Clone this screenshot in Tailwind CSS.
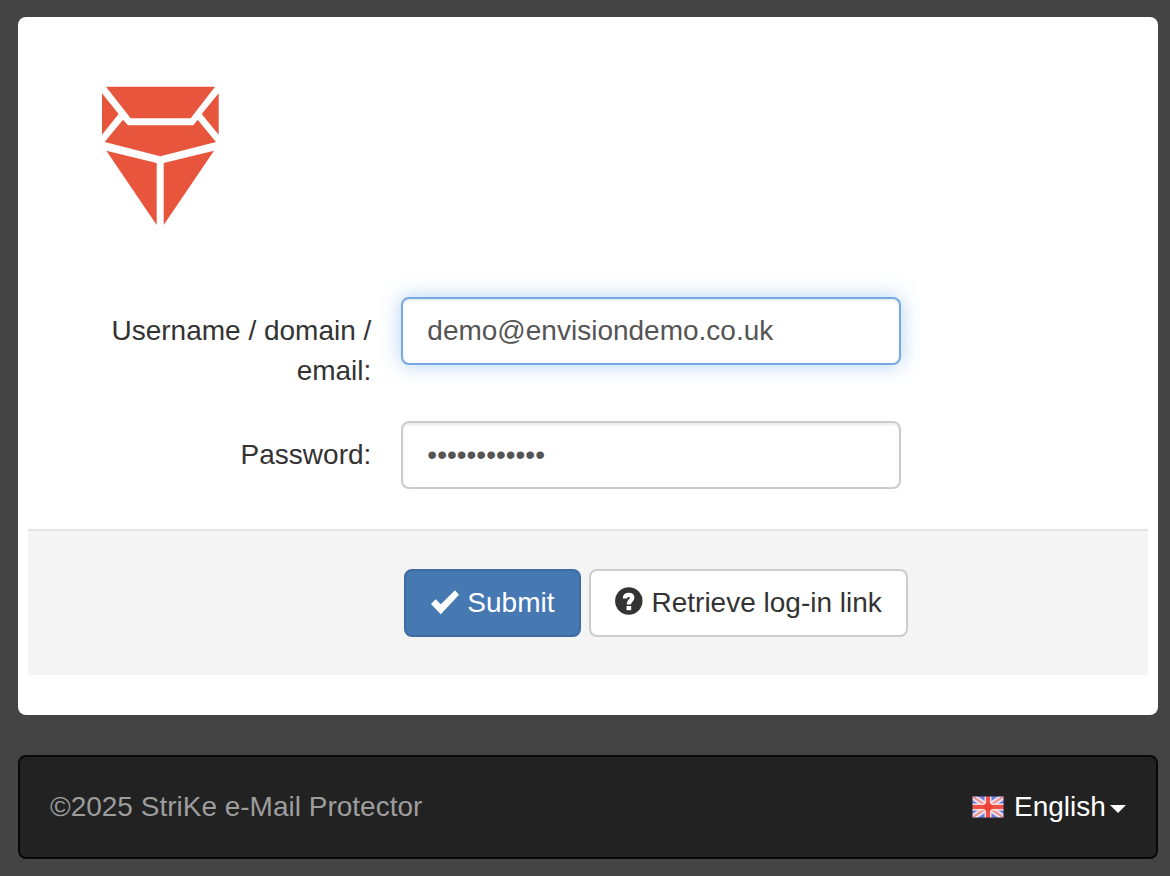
<!DOCTYPE html>
<html lang="en">
<head>
  <meta charset="UTF-8">
  <meta name="viewport" content="width=device-width, initial-scale=1.0">
  <title>StriKe e-Mail Protector</title>
  <script src="https://cdn.jsdelivr.net/npm/@tailwindcss/browser@4"></script>
</head>
<body class="bg-[#444] min-h-screen pt-[17px] pb-4 pl-[18px] pr-3 font-['Liberation_Sans',Arial,sans-serif] text-[28px] leading-10 text-[#333]">
  <!-- Login -->
  <main class="bg-white rounded-lg px-[10px] pt-[69px] pb-10">
    <svg class="w-[118px] h-[140px] ml-[74px] mb-[71px]" viewBox="0 0 354 420" fill="#e8553d" role="img" aria-label="StriKe">
      <path d="M12 2H339L266 97H86Z"/>
      <path d="M0 22L50 84L0 146Z"/>
      <path d="M350 22L299 84L350 146Z"/>
      <path d="M63 101L78 118H274L287 101L342 168L175 211L8 168Z"/>
      <path d="M13 194L164 231V417Z"/>
      <path d="M336 194L185 231V417Z"/>
    </svg>

    <form id="loginForm">
      <div class="grid grid-cols-3 mb-[30px]">
        <label class="text-right pt-[14px] pl-[30px] pr-[30px]" for="username">Username / domain / email:</label>
        <div class="col-span-2">
          <input class="block w-full max-w-[500px] h-[68px] px-6 bg-white text-[#555] border-2 border-[#74a9e4] rounded-lg outline-none shadow-[inset_0_2px_2px_rgba(0,0,0,0.075),0_0_20px_rgba(102,165,233,0.5)]" id="username" type="text" value="demo@envisiondemo.co.uk">
        </div>
      </div>
      <div class="grid grid-cols-3 mb-10">
        <label class="text-right pt-[14px] pl-[30px] pr-[30px]" for="password">Password:</label>
        <div class="col-span-2">
          <input class="block w-full max-w-[500px] h-[68px] px-6 bg-white text-[#555] border-2 border-[#ccc] rounded-lg outline-none shadow-[inset_0_2px_2px_rgba(0,0,0,0.075)]" id="password" type="password" value="password1234">
        </div>
      </div>

      <div class="grid grid-cols-3 bg-[#f4f4f4] border-t-2 border-[#e5e5e5] py-[38px]">
        <div class="col-start-2 col-span-2 flex gap-2 pl-[3px]">
          <button class="flex items-center gap-2 h-[68px] px-[25px] bg-[#4678b2] text-white border-2 border-[#3e6ba2] rounded-lg whitespace-nowrap" type="submit">
            <svg class="w-7 h-7" viewBox="0 0 28 28" fill="currentColor" aria-hidden="true">
              <path d="M0 15L4.6 10.2L9.8 15.3L24 1.2L28 5.8L9.8 25.2Z"/>
            </svg>
            Submit
          </button>
          <button class="flex items-center gap-2 h-[68px] px-6 bg-white text-[#333] border-2 border-[#ccc] rounded-lg whitespace-nowrap" type="button">
            <svg class="w-7 h-7 mb-1" viewBox="0 0 28 28" aria-hidden="true">
              <circle cx="13.8" cy="14" r="13.7" fill="#333"/>
              <path d="M10 11.4C10 9 11.5 7.9 13.8 7.9C16 7.9 17.2 9 17.2 10.8C17.2 13.6 13.8 13.4 13.8 17.4" fill="none" stroke="#fff" stroke-width="4.4"/>
              <path d="M11.5 19H16.2V23.2H11.5Z" fill="#fff"/>
            </svg>
            Retrieve log-in link
          </button>
        </div>
      </div>
    </form>
  </main>

  <!-- Footer -->
  <footer class="mt-10 flex items-center justify-between px-[30px] py-[30px] bg-[#222] border-2 border-[#080808] rounded-lg">
    <p class="text-[#9d9d9d]">©2025 StriKe e-Mail Protector</p>
    <div class="flex items-center text-white">
      <svg class="w-8 h-[22px] mr-[10px]" viewBox="0 0 32 22" aria-hidden="true">
        <path d="M0 0H32V22H0Z" fill="#6f7dd6"/>
        <path d="M0 0L32 22M32 0L0 22" stroke="#eadff0" stroke-width="6"/>
        <path d="M0 0L32 22M32 0L0 22" stroke="#f0908c" stroke-width="2"/>
        <path d="M16 0V22M0 11H32" stroke="#fbdcdc" stroke-width="7"/>
        <path d="M16 0V22M0 11H32" stroke="#ef4f45" stroke-width="4"/>
        <circle cx="16" cy="11" r="4" fill="#ef4136"/>
        <path d="M0 0H32V22H0Z" fill="none" stroke="#3a3d66" stroke-opacity="0.6" stroke-width="2"/>
      </svg>
      <select class="appearance-none bg-transparent text-white outline-none cursor-pointer" id="language" aria-label="Language">
        <option>English</option>
      </select>
      <svg class="w-4 h-2 ml-1 mt-1" viewBox="0 0 16 8" fill="currentColor" aria-hidden="true">
        <path d="M0 0H16L8 8Z"/>
      </svg>
    </div>
  </footer>
</body>
</html>
